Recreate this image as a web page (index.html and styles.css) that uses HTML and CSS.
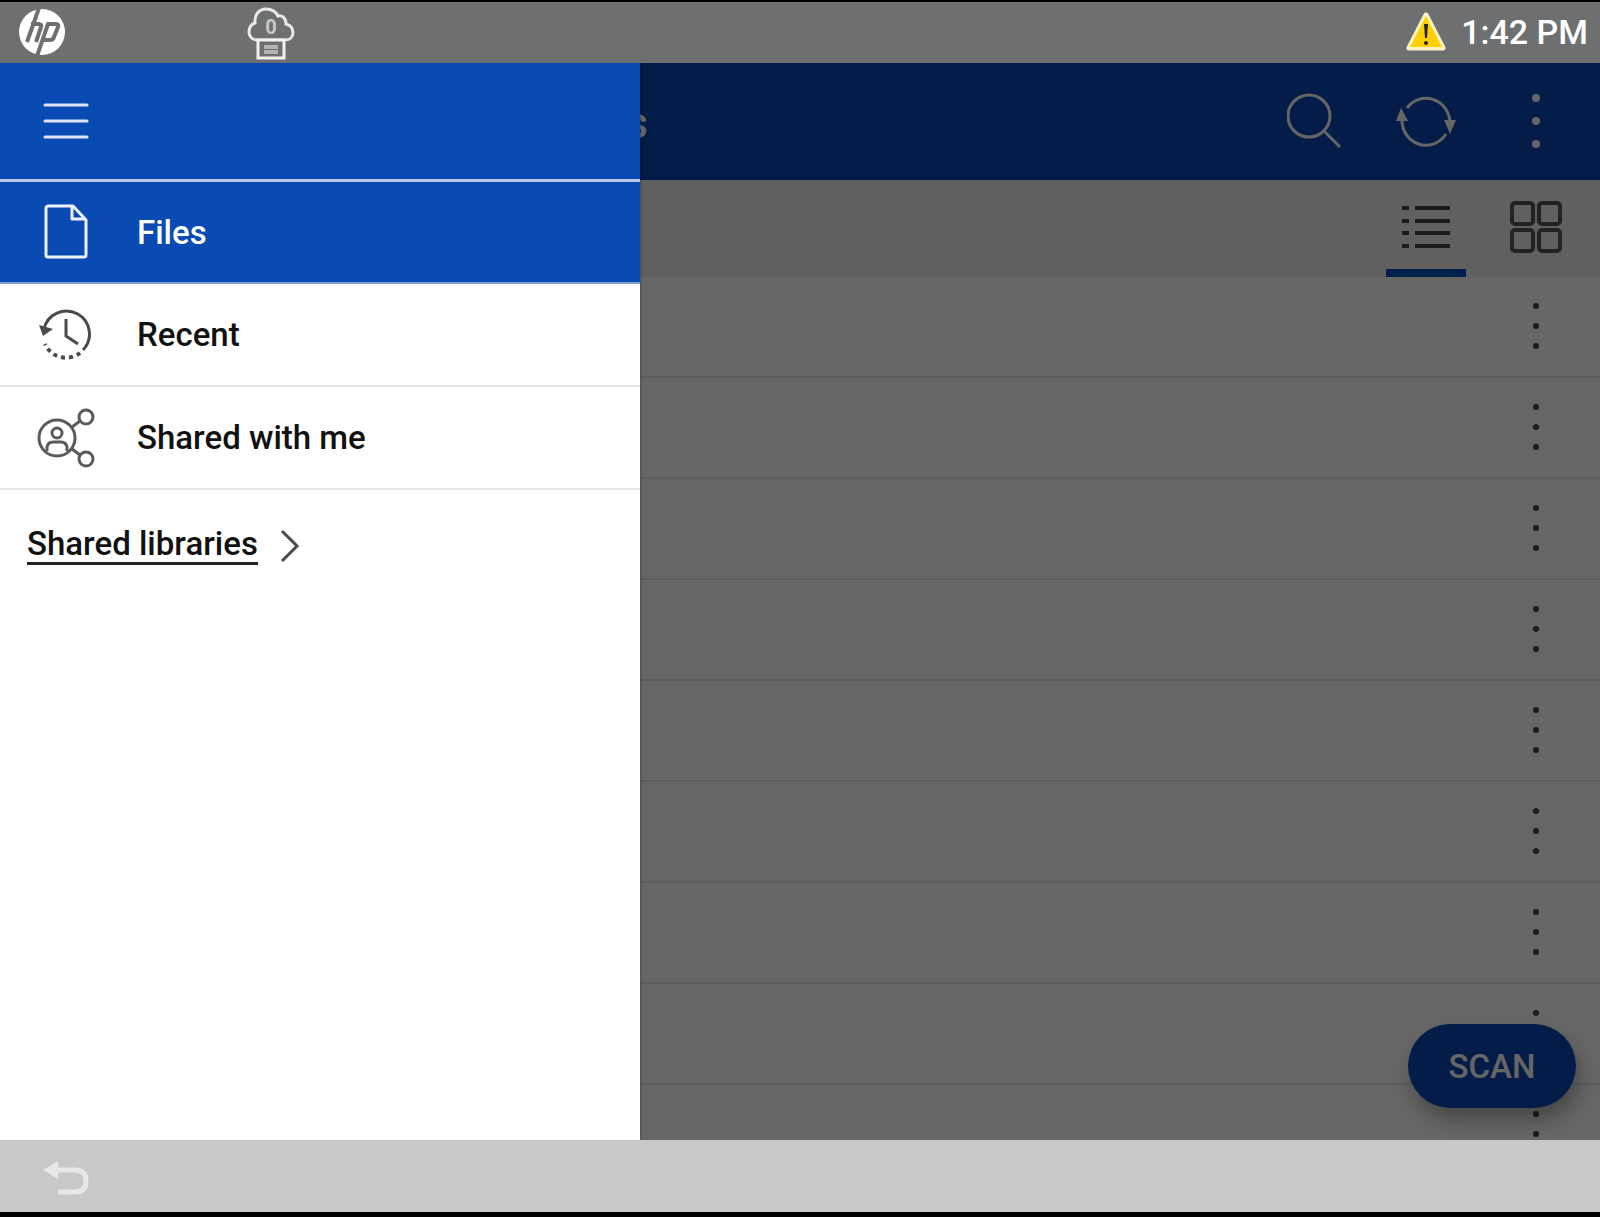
FILE: index.html
```html
<!DOCTYPE html>
<html lang="en">

<head>
    <meta charset="UTF-8">
    <title>Files</title>
    <link rel="stylesheet" href="styles.css">
</head>
<body>

  <header class="status">
    <svg class="hp-logo" width="46" height="46" viewBox="0 0 46 46" role="img" aria-label="HP">
      <circle cx="23" cy="23" r="23" fill="#fff"/>
      <g fill="none" stroke="#6e6f70" stroke-width="4">
        <path d="M20 -1L8 33"/>
        <path d="M12 15H20Q23 15 22 18L17 33"/>
        <path d="M18 47L29 15H37Q40 15 39 18L35 28Q34 31 31 31H24"/>
      </g>
    </svg>
    <svg class="cloud" width="48" height="54" viewBox="0 0 48 54" role="img" aria-label="Print jobs">
      <path d="M10 34C4 34 2 29 2 26C2 21 5 18 8 17C7 9 12 3 19 3C25 3 29 6 31 10C35 9 39 12 39 18C43 19 46 22 46 27C46 31 43 34 38 34Z" fill="none" stroke="#e9e9e9" stroke-width="3"/>
      <path d="M11 34H37V52H11Z" fill="#6e6f70" stroke="#f2f2f2" stroke-width="3"/>
      <path d="M17 41H31M17 46H31" stroke="#b4b4b4" stroke-width="4"/>
      <text x="24" y="28" text-anchor="middle">0</text>
    </svg>
    <div class="status-right">
      <svg width="42" height="42" viewBox="0 0 42 42" role="img" aria-label="Warning">
        <path d="M21 4L38 37H4Z" fill="#ffcf00" stroke="#fff3c4" stroke-width="5" stroke-linejoin="round"/>
        <path d="M21 5L37 36H5Z" fill="#ffcf00"/>
        <path d="M19 13H23L22 27H20Z" fill="#222"/>
        <circle cx="21" cy="32" r="2" fill="#222"/>
      </svg>
      <span class="time">1:42 PM</span>
    </div>
  </header>

  <main class="app">
    <div class="topbar">
      <h1 class="title">s</h1>
      <div class="actions">
        <button aria-label="Search">
          <svg width="58" height="58" viewBox="0 0 58 58" fill="none" stroke="#fff" stroke-width="3">
            <circle cx="22" cy="24" r="21"/>
            <path d="M37 39L53 55"/>
          </svg>
        </button>
        <button aria-label="Refresh">
          <svg width="60" height="60" viewBox="0 0 60 60" fill="none" stroke="#fff" stroke-width="3">
            <path d="M11 17A24 25 0 0 1 54 32"/>
            <path d="M50 43A24 25 0 0 1 6 28"/>
            <path d="M0 30L5 17L12 30ZM48 29H60L54 43Z" fill="#fff" stroke="none"/>
          </svg>
        </button>
        <button aria-label="More">
          <svg width="10" height="56" viewBox="0 0 10 56" fill="#fff">
            <circle cx="5" cy="5" r="4"/><circle cx="5" cy="28" r="4"/><circle cx="5" cy="51" r="4"/>
          </svg>
        </button>
      </div>
    </div>

    <div class="toolbar">
      <button class="selected" aria-label="List view">
        <svg width="50" height="50" viewBox="0 0 50 50" stroke="#444" stroke-width="4">
          <path d="M1 6H8M14 6H49M1 19H8M14 19H49M1 31H8M14 31H49M1 44H8M14 44H49"/>
        </svg>
      </button>
      <button aria-label="Grid view">
        <svg width="52" height="52" viewBox="0 0 52 52" fill="none" stroke="#555" stroke-width="4">
          <rect x="2" y="2" width="21" height="21" rx="3"/><rect x="29" y="2" width="21" height="21" rx="3"/>
          <rect x="2" y="29" width="21" height="21" rx="3"/><rect x="29" y="29" width="21" height="21" rx="3"/>
        </svg>
      </button>
    </div>

    <ul class="files" id="files"></ul>

    <button class="scan">SCAN</button>
    <div class="scrim"></div>

    <nav class="drawer">
      <div class="drawer-head">
        <button class="menu" aria-label="Menu">
          <svg width="46" height="36" viewBox="0 0 46 36" stroke="#dfe6f6" stroke-width="3" stroke-linecap="round">
            <path d="M2 2H44M2 18H44M2 34H44"/>
          </svg>
        </button>
      </div>
      <a class="item active" href="#">
        <span class="icon">
          <svg width="44" height="56" viewBox="0 0 44 56" fill="none" stroke="#eef2fb" stroke-width="3" stroke-linejoin="round">
            <path d="M5 2H29L42 16V51Q42 53 40 53H4Q2 53 2 51V4Q2 2 5 2Z"/>
            <path d="M28 3V15H41"/>
          </svg>
        </span>
        Files
      </a>
      <a class="item" href="#">
        <span class="icon">
          <svg width="54" height="54" viewBox="0 0 54 54" fill="none" stroke="#4a4a4a" stroke-width="3">
            <path d="M5 21A23 23 0 1 1 44 42"/>
            <path d="M41 45A23 23 0 0 1 6 36" stroke-width="4" stroke-dasharray="4 4"/>
            <path d="M27 11V28L39 36"/>
            <path d="M0 17L14 21L4 28Z" fill="#4a4a4a" stroke="none"/>
          </svg>
        </span>
        Recent
      </a>
      <a class="item" href="#">
        <span class="icon">
          <svg width="58" height="60" viewBox="0 0 58 60" fill="none" stroke="#5a5a5a" stroke-width="3">
            <circle cx="20" cy="30" r="18"/>
            <circle cx="20" cy="25" r="5"/>
            <path d="M10 43V39Q11 34 16 34H24Q29 34 30 39V43"/>
            <circle cx="49" cy="9" r="7"/>
            <circle cx="49" cy="51" r="7"/>
            <path d="M35 19L43 13M35 41L43 47"/>
          </svg>
        </span>
        Shared with me
      </a>
      <a class="libraries" href="#">
        <span>Shared libraries</span>
        <svg width="20" height="34" viewBox="0 0 20 34" fill="none" stroke="#4a4a4a" stroke-width="3">
          <path d="M2 2L17 17L2 32"/>
        </svg>
      </a>
    </nav>
  </main>

  <footer class="bottom">
    <button class="back" aria-label="Back">
      <svg width="48" height="36" viewBox="0 0 48 36">
        <path d="M14 10H33Q44 10 44 21Q44 32 33 32H16" fill="none" stroke="#e8e8e8" stroke-width="5"/>
        <path d="M1 10L16 1V19Z" fill="#e8e8e8"/>
      </svg>
    </button>
  </footer>

  <script>
    const files = document.getElementById("files");

    for (let i = 0; i < 9; i++) {
      const row = document.createElement("li");
      row.innerHTML = `<button aria-label="File options">
        <svg width="8" height="48" viewBox="0 0 8 48" fill="#444">
          <circle cx="4" cy="4" r="3"/><circle cx="4" cy="24" r="3"/><circle cx="4" cy="44" r="3"/>
        </svg>
      </button>`;
      files.appendChild(row);
    }
  </script>

</body>
</html>
```
FILE: styles.css
```css
* {
    box-sizing: border-box;
}

body {
    margin: 0;
    height: 100vh;
    display: flex;
    flex-direction: column;
    border-top: 2px solid #000;
    border-bottom: 5px solid #000;
    background-color: #000;
    font-family: Roboto, "Open Sans", sans-serif;
    font-size: 33px;
    font-weight: 500;
    overflow: hidden;
}

button {
    display: flex;
    align-items: center;
    justify-content: center;
    padding: 0;
    border: none;
    background: none;
    font: inherit;
    cursor: pointer;
}

svg {
    display: block;
    flex: none;
}

.status {
    flex: none;
    display: flex;
    align-items: center;
    height: 61px;
    padding: 0 12px 2px 19px;
    background-color: #6e6f70;
    color: #fff;
}

.cloud {
    margin: 2px 0 0 182px;
}

.cloud text {
    font-size: 20px;
    font-weight: bold;
    fill: #c8c8c8;
}

.status-right {
    display: flex;
    align-items: center;
    gap: 14px;
    margin-left: auto;
}

.time {
    font-size: 34px;
}

.app {
    position: relative;
    flex: 1;
    min-height: 0;
    display: flex;
    flex-direction: column;
    overflow: hidden;
    background-color: #fff;
}

.topbar {
    flex: none;
    display: flex;
    align-items: center;
    justify-content: space-between;
    height: 117px;
    padding: 0 9px 2px 0;
    background-color: #0a4ab3;
    color: #fff;
}

.title {
    width: 648px;
    margin: 0;
    padding-top: 4px;
    text-align: right;
    font-size: 44px;
    font-weight: 500;
}

.actions {
    display: flex;
}

.actions button,
.toolbar button,
.files button {
    width: 110px;
}

.toolbar {
    flex: none;
    display: flex;
    justify-content: flex-end;
    height: 97px;
    padding-right: 9px;
    background-color: #f1f1f1;
}

.toolbar button {
    position: relative;
    padding-bottom: 4px;
}

.toolbar .selected::after {
    content: "";
    position: absolute;
    left: 15px;
    right: 15px;
    bottom: 0;
    height: 8px;
    background-color: #0054b8;
}

.files {
    margin: 0;
    padding: 0;
    list-style: none;
}

.files li {
    display: flex;
    justify-content: flex-end;
    height: 101px;
    padding: 0 9px 2px 0;
    border-bottom: 2px solid #e6e6e6;
}

.scan {
    position: absolute;
    right: 24px;
    bottom: 32px;
    width: 168px;
    height: 84px;
    border-radius: 42px;
    background-color: #0a4ab3;
    color: #fff;
    box-shadow: 4px 12px 20px rgba(0, 0, 0, 0.3);
}

.scrim {
    position: absolute;
    inset: 0;
    background-color: rgba(0, 0, 0, 0.6);
}

.drawer {
    position: absolute;
    top: 0;
    bottom: 0;
    left: 0;
    width: 40%;
    background-color: #fff;
    box-shadow: 0 0 3px rgba(0, 0, 0, 0.5);
}

.drawer-head {
    display: flex;
    height: 119px;
    background-color: #0a4ab3;
    border-bottom: 3px solid #b5c8e8;
}

.menu {
    width: 132px;
}

.item {
    display: flex;
    align-items: center;
    height: 103px;
    border-bottom: 2px solid #e6e6e6;
    color: #111;
    text-decoration: none;
}

.item.active {
    height: 102px;
    background-color: #0a4ab3;
    border-bottom-color: #7f9fd6;
    color: #fff;
}

.icon {
    display: flex;
    justify-content: center;
    width: 132px;
    margin-right: 5px;
}

.libraries {
    display: flex;
    align-items: center;
    gap: 22px;
    padding: 36px 27px;
    color: #111;
    text-decoration: none;
}

.libraries span {
    line-height: 36px;
    border-bottom: 3px solid #222;
}

.bottom {
    flex: none;
    display: flex;
    height: 72px;
    background-color: #c8c8c8;
}

.back {
    width: 132px;
    padding-top: 4px;
}
```
